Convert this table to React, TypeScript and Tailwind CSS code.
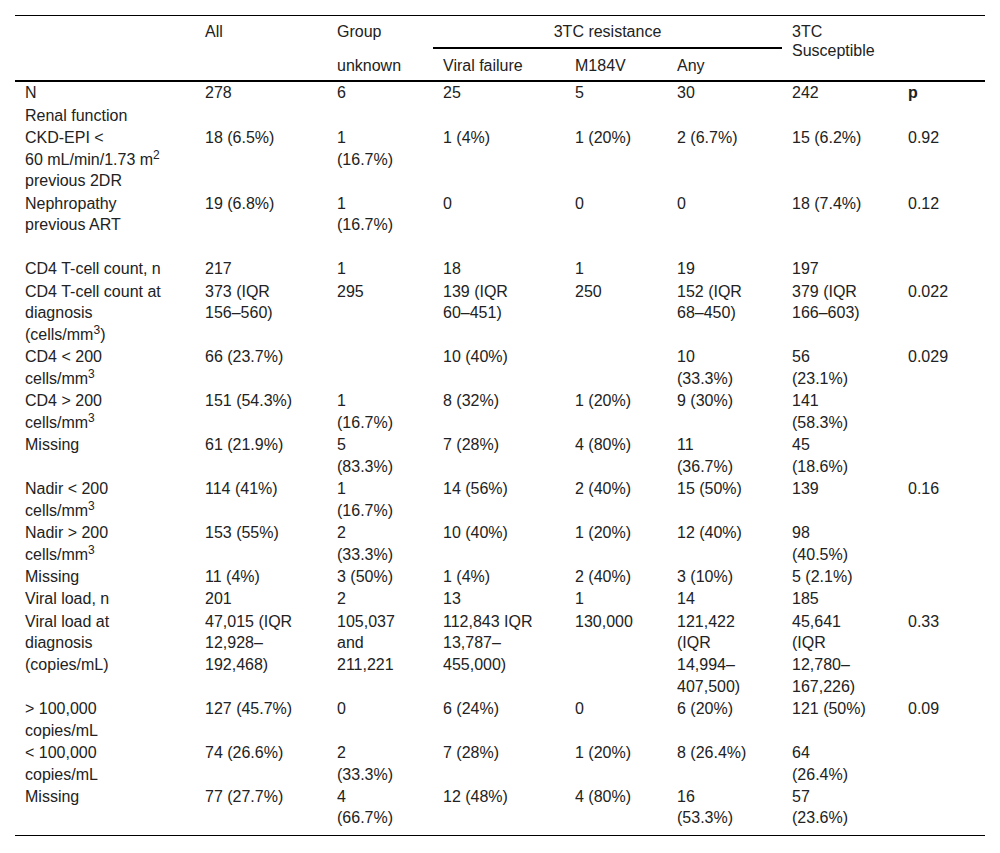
import type React from "react"

type Cell = React.ReactNode[]

const m2 = (
  <>
    60 mL/min/1.73 m<sup>2</sup>
  </>
)
const mm3 = (
  <>
    cells/mm<sup>3</sup>
  </>
)
const mm3paren = (
  <>
    (cells/mm<sup>3</sup>)
  </>
)

const rows: Cell[][] = [
  [["N"], ["278"], ["6"], ["25"], ["5"], ["30"], ["242"], [<span className="font-bold">p</span>]],
  [["Renal function"], [], [], [], [], [], [], []],
  [["CKD-EPI <", m2, "previous 2DR"], ["18 (6.5%)"], ["1", "(16.7%)"], ["1 (4%)"], ["1 (20%)"], ["2 (6.7%)"], ["15 (6.2%)"], ["0.92"]],
  [["Nephropathy", "previous ART", "\u00a0"], ["19 (6.8%)"], ["1", "(16.7%)"], ["0"], ["0"], ["0"], ["18 (7.4%)"], ["0.12"]],
  [["CD4 T-cell count, n"], ["217"], ["1"], ["18"], ["1"], ["19"], ["197"], []],
  [["CD4 T-cell count at", "diagnosis", mm3paren], ["373 (IQR", "156–560)"], ["295"], ["139 (IQR", "60–451)"], ["250"], ["152 (IQR", "68–450)"], ["379 (IQR", "166–603)"], ["0.022"]],
  [["CD4 < 200", mm3], ["66 (23.7%)"], [], ["10 (40%)"], [], ["10", "(33.3%)"], ["56", "(23.1%)"], ["0.029"]],
  [["CD4 > 200", mm3], ["151 (54.3%)"], ["1", "(16.7%)"], ["8 (32%)"], ["1 (20%)"], ["9 (30%)"], ["141", "(58.3%)"], []],
  [["Missing"], ["61 (21.9%)"], ["5", "(83.3%)"], ["7 (28%)"], ["4 (80%)"], ["11", "(36.7%)"], ["45", "(18.6%)"], []],
  [["Nadir < 200", mm3], ["114 (41%)"], ["1", "(16.7%)"], ["14 (56%)"], ["2 (40%)"], ["15 (50%)"], ["139"], ["0.16"]],
  [["Nadir > 200", mm3], ["153 (55%)"], ["2", "(33.3%)"], ["10 (40%)"], ["1 (20%)"], ["12 (40%)"], ["98", "(40.5%)"], []],
  [["Missing"], ["11 (4%)"], ["3 (50%)"], ["1 (4%)"], ["2 (40%)"], ["3 (10%)"], ["5 (2.1%)"], []],
  [["Viral load, n"], ["201"], ["2"], ["13"], ["1"], ["14"], ["185"], []],
  [
    ["Viral load at", "diagnosis", "(copies/mL)"],
    ["47,015 (IQR", "12,928–", "192,468)"],
    ["105,037", "and", "211,221"],
    ["112,843 IQR", "13,787–", "455,000)"],
    ["130,000"],
    ["121,422", "(IQR", "14,994–", "407,500)"],
    ["45,641", "(IQR", "12,780–", "167,226)"],
    ["0.33"],
  ],
  [["> 100,000", "copies/mL"], ["127 (45.7%)"], ["0"], ["6 (24%)"], ["0"], ["6 (20%)"], ["121 (50%)"], ["0.09"]],
  [["< 100,000", "copies/mL"], ["74 (26.6%)"], ["2", "(33.3%)"], ["7 (28%)"], ["1 (20%)"], ["8 (26.4%)"], ["64", "(26.4%)"], []],
  [["Missing"], ["77 (27.7%)"], ["4", "(66.7%)"], ["12 (48%)"], ["4 (80%)"], ["16", "(53.3%)"], ["57", "(23.6%)"], []],
]

function Lines({ lines }: { lines: Cell }) {
  return (
    <>
      {lines.map((line, i) => (
        <div key={i} className="whitespace-nowrap">
          {line}
        </div>
      ))}
    </>
  )
}

export default function App() {
  return (
    <div className="min-h-[853px] bg-white px-[15px] pt-[15px] font-['Liberation_Sans',Arial,sans-serif] text-[16px] text-[#222]">
      <table className="w-[970px] table-fixed border-separate border-spacing-0 border-t border-b border-black">
        <colgroup>
          <col className="w-[180px]" />
          <col className="w-[132px]" />
          <col className="w-[106px]" />
          <col className="w-[132px]" />
          <col className="w-[102px]" />
          <col className="w-[115px]" />
          <col className="w-[116px]" />
          <col className="w-[87px]" />
        </colgroup>
        <thead className="text-left align-top font-normal leading-[19px]">
          <tr>
            <th rowSpan={2} className="border-b-2 border-black pl-[10px] pt-[6px] font-normal"></th>
            <th rowSpan={2} className="border-b-2 border-black pl-[10px] pt-[6px] font-normal">
              All
            </th>
            <th className="pl-[10px] pt-[6px] pb-[6px] font-normal">Group</th>
            <th colSpan={3} className="border-b-2 border-black pl-[10px] pr-[10px] pt-[6px] pb-[6px] text-center font-normal">
              3TC resistance
            </th>
            <th rowSpan={2} className="border-b-2 border-black pl-[10px] pt-[6px] font-normal">
              3TC
              <br />
              Susceptible
            </th>
            <th rowSpan={2} className="border-b-2 border-black pl-[10px] pt-[6px] font-normal"></th>
          </tr>
          <tr>
            <th className="border-b-2 border-black pl-[10px] pt-[7px] pb-[5px] font-normal">unknown</th>
            <th className="border-b-2 border-black pl-[10px] pt-[7px] pb-[5px] font-normal">Viral failure</th>
            <th className="border-b-2 border-black pl-[10px] pt-[7px] pb-[5px] font-normal">M184V</th>
            <th className="border-b-2 border-black pl-[10px] pt-[7px] pb-[5px] font-normal">Any</th>
          </tr>
        </thead>
        <tbody className="leading-[21.6px]">
          {rows.map((row, r) => (
            <tr key={r}>
              {row.map((cell, c) => (
                <td
                  key={c}
                  className={
                    r === rows.length - 1
                      ? "pl-[10px] pt-[0.4px] pb-[5.6px] align-top"
                      : "pl-[10px] pt-[0.4px] pb-[0.4px] align-top"
                  }
                >
                  <Lines lines={cell} />
                </td>
              ))}
            </tr>
          ))}
        </tbody>
      </table>
    </div>
  )
}
